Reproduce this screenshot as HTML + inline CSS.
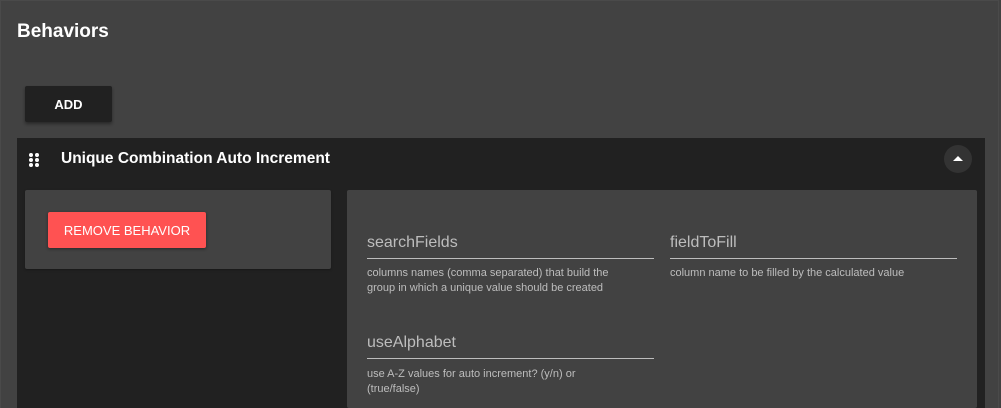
<!DOCTYPE html>
<html><head><style>
body{margin:0;width:1001px;height:408px;overflow:hidden;background:#424242;font-family:"Liberation Sans",Roboto,sans-serif;position:relative}
.a{position:absolute}
.frame{left:0;top:0;width:999px;height:408px;border:1px solid #4a4a4a;border-bottom:none;box-sizing:border-box}
h1{position:absolute;left:17px;top:21px;margin:0;font-size:19px;font-weight:bold;color:#fff}
.add{left:25px;top:86px;width:87px;height:36px;background:#212121;color:#fff;font-size:13px;font-weight:bold;text-align:center;line-height:37px;box-shadow:0 2px 3px rgba(0,0,0,.4);border-radius:2px}
.panel{left:17px;top:138px;width:968px;height:270px;background:#212121}
.title{left:61px;top:150px;font-size:15.5px;font-weight:bold;color:#fff}
.dot{width:4px;height:4px;border-radius:50%;background:#fff}
.circ{left:944px;top:145px;width:28px;height:28px;border-radius:50%;background:#333}
.card{background:#424242;border-radius:2px}
.rm{left:48px;top:212px;width:158px;height:36px;background:#ff5252;color:#fff;font-size:13px;text-align:center;line-height:37px;border-radius:2px;box-shadow:0 1px 3px rgba(0,0,0,.4)}
.lab{font-size:16px;color:#bdbdbd}
.line{height:1px;background:#bdbdbd;width:287px}
.help{font-size:11px;color:#bdbdbd;line-height:15px;width:270px}
</style></head><body>
<div class="a frame"></div>
<h1>Behaviors</h1>
<div class="a add">ADD</div>
<div class="a panel"></div>
<div class="a dot" style="left:29px;top:153px"></div><div class="a dot" style="left:35px;top:153px"></div>
<div class="a dot" style="left:29px;top:158px"></div><div class="a dot" style="left:35px;top:158px"></div>
<div class="a dot" style="left:29px;top:163px"></div><div class="a dot" style="left:35px;top:163px"></div>
<div class="a title">Unique Combination Auto Increment</div>
<div class="a circ"><svg width="28" height="28"><path d="M9 16 L14 11 L19 16Z" fill="#fff"/></svg></div>
<div class="a card" style="left:25px;top:190px;width:306px;height:79px;box-shadow:0 1px 2px rgba(0,0,0,.3)"></div>
<div class="a rm">REMOVE BEHAVIOR</div>
<div class="a card" style="left:347px;top:190px;width:630px;height:218px"></div>
<div class="a lab" style="left:367px;top:234px">searchFields</div>
<div class="a line" style="left:367px;top:258px"></div>
<div class="a help" style="left:367px;top:266px">columns names (comma separated) that build the group in which a unique value should be created</div>
<div class="a lab" style="left:670px;top:234px">fieldToFill</div>
<div class="a line" style="left:670px;top:258px"></div>
<div class="a help" style="left:670px;top:266px;width:287px">column name to be filled by the calculated value</div>
<div class="a lab" style="left:367px;top:334px">useAlphabet</div>
<div class="a line" style="left:367px;top:358px"></div>
<div class="a help" style="left:367px;top:367px;width:240px">use A-Z values for auto increment? (y/n) or (true/false)</div>
</body></html>
